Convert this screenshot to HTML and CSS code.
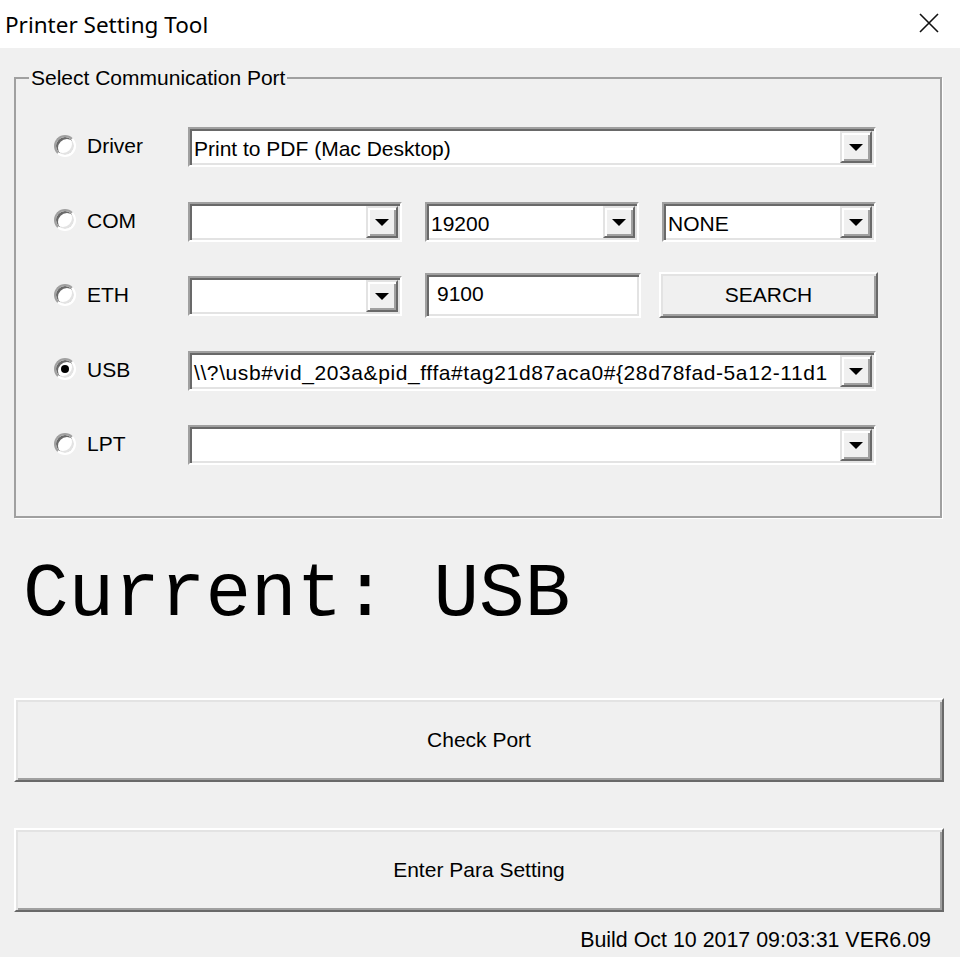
FILE: index.html
```html
<!DOCTYPE html>
<html lang="en">
<head>
    <meta charset="UTF-8">
    <title>Printer Setting Tool</title>
    <link rel="stylesheet" href="styles.css">
</head>
<body>
    <div class="titlebar">
        <span class="title">Printer Setting Tool</span>
        <svg class="close" width="20" height="20" viewBox="0 0 20 20">
            <path d="M1 1 L19 19 M19 1 L1 19" stroke="#111" stroke-width="1.6" fill="none"/>
        </svg>
    </div>

    <div class="window">
        <fieldset class="group">
            <legend>Select Communication Port</legend>

            <div class="port-row">
                <span class="radio"></span>
                <span class="label">Driver</span>
                <div class="combo">
                    <span class="combo-text">Print to PDF (Mac Desktop)</span>
                    <span class="drop"><i></i></span>
                </div>
            </div>

            <div class="port-row">
                <span class="radio"></span>
                <span class="label">COM</span>
                <div class="cells">
                    <div class="combo">
                        <span class="combo-text"></span>
                        <span class="drop"><i></i></span>
                    </div>
                    <div class="combo">
                        <span class="combo-text">19200</span>
                        <span class="drop"><i></i></span>
                    </div>
                    <div class="combo">
                        <span class="combo-text">NONE</span>
                        <span class="drop"><i></i></span>
                    </div>
                </div>
            </div>

            <div class="port-row">
                <span class="radio"></span>
                <span class="label">ETH</span>
                <div class="cells">
                    <div class="combo">
                        <span class="combo-text"></span>
                        <span class="drop"><i></i></span>
                    </div>
                    <div class="edit">9100</div>
                    <button class="btn search">SEARCH</button>
                </div>
            </div>

            <div class="port-row">
                <span class="radio checked"></span>
                <span class="label">USB</span>
                <div class="combo">
                    <span class="combo-text usb-path">\\?\usb#vid_203a&amp;pid_fffa#tag21d87aca0#{28d78fad-5a12-11d1</span>
                    <span class="drop"><i></i></span>
                </div>
            </div>

            <div class="port-row">
                <span class="radio"></span>
                <span class="label">LPT</span>
                <div class="combo">
                    <span class="combo-text"></span>
                    <span class="drop"><i></i></span>
                </div>
            </div>
        </fieldset>

        <div class="current">Current: USB</div>

        <button class="btn big check">Check Port</button>
        <button class="btn big para">Enter Para Setting</button>

        <div class="build">Build Oct 10 2017 09:03:31 VER6.09</div>
    </div>
</body>
</html>
```

FILE: styles.css
```css
/* Base */
* {
    box-sizing: border-box;
}
body {
    margin: 0;
    background: #f0f0f0;
    font-family: 'Liberation Sans', Arial, sans-serif;
    font-size: 21px;
    color: #000;
}

/* Title bar */
.titlebar {
    height: 48px;
    background: #fff;
    display: flex;
    align-items: center;
    justify-content: space-between;
    padding: 0 21px 0 5px;
}
.title {
    font-family: 'Noto Sans', sans-serif;
    font-size: 22.5px;
    margin-top: 1px;
}
.close {
    display: block;
    margin-top: -2px;
}

/* Window body */
.window {
    padding-top: 18px;
}

/* Group box */
.group {
    margin: 0 18px 0 14px;
    padding: 37px 0 51px 38px;
    border: 2px solid #a0a0a0;
    box-shadow: 1px 1px 0 #fff;
    display: grid;
    row-gap: 34.5px;
}
.group legend {
    margin-left: -25px;
    padding: 0 2px;
    line-height: 24px;
}

.port-row {
    display: grid;
    grid-template-columns: 33px 101px 688px;
    grid-template-rows: 40px;
    align-items: center;
    height: 40px;
}

/* Radio button */
.radio {
    width: 22px;
    height: 22px;
    margin-top: -3px;
    border-radius: 50%;
    border: 2px solid;
    border-color: #a0a0a0 #fff #fff #a0a0a0;
    box-shadow: inset 2px 2px 0 #696969, inset -2px -2px 0 #e3e3e3;
    background: #fff;
    position: relative;
}
.radio.checked::after {
    content: '';
    position: absolute;
    left: 5px;
    top: 5px;
    width: 8px;
    height: 8px;
    border-radius: 50%;
    background: #000;
}

.label {
    margin-top: -2px;
}

/* Three controls in one row */
.cells {
    display: grid;
    grid-template-columns: repeat(3, 214px);
    grid-template-rows: 40px;
    column-gap: 23px;
    align-items: center;
    height: 40px;
}

/* Sunken controls */
.combo,
.edit {
    height: 40px;
    border: 2px solid;
    border-color: #a0a0a0 #fff #fff #a0a0a0;
    box-shadow: inset 2px 2px 0 #696969, inset -2px -2px 0 #e3e3e3;
    background: #fff;
}
.combo {
    display: flex;
    align-items: stretch;
    padding: 2px;
}
.combo-text {
    flex: 1;
    min-width: 0;
    overflow: hidden;
    white-space: nowrap;
    padding-left: 2px;
    line-height: 36px;
}
.usb-path {
    letter-spacing: 0.6px;
}
.edit {
    height: 45px;
    margin: -2px -2px 0 0;
    padding: 0 10px;
    line-height: 38px;
}

/* Dropdown button */
.drop {
    width: 32px;
    flex: none;
    background: #f0f0f0;
    border: 2px solid;
    border-color: #e3e3e3 #696969 #696969 #e3e3e3;
    box-shadow: inset 2px 2px 0 #fff, inset -2px -2px 0 #a0a0a0;
    display: flex;
    align-items: center;
    justify-content: center;
}
.drop i {
    width: 0;
    height: 0;
    border-left: 7px solid transparent;
    border-right: 7px solid transparent;
    border-top: 7px solid #000;
    margin-top: 1px;
}

/* Raised buttons */
.btn {
    font-family: inherit;
    font-size: 21px;
    color: #000;
    background: #f0f0f0;
    border: 2px solid;
    border-color: #fff #696969 #696969 #fff;
    box-shadow: inset 2px 2px 0 #e3e3e3, inset -2px -2px 0 #a0a0a0;
    padding: 0;
}
.search {
    height: 46px;
    margin: -2px -2px 0 -3px;
}
.big {
    display: block;
    width: 930px;
    height: 84px;
    margin-left: 14px;
}

/* Current port */
.current {
    font-family: 'Liberation Mono', 'Courier New', monospace;
    font-size: 76px;
    line-height: 76px;
    margin-top: 39px;
    padding-left: 23px;
}

.check {
    margin-top: 65px;
}
.para {
    margin-top: 46px;
}

/* Footer */
.build {
    text-align: right;
    padding-right: 29px;
    margin-top: 16px;
    line-height: 24px;
    font-size: 21.4px;
}
```
